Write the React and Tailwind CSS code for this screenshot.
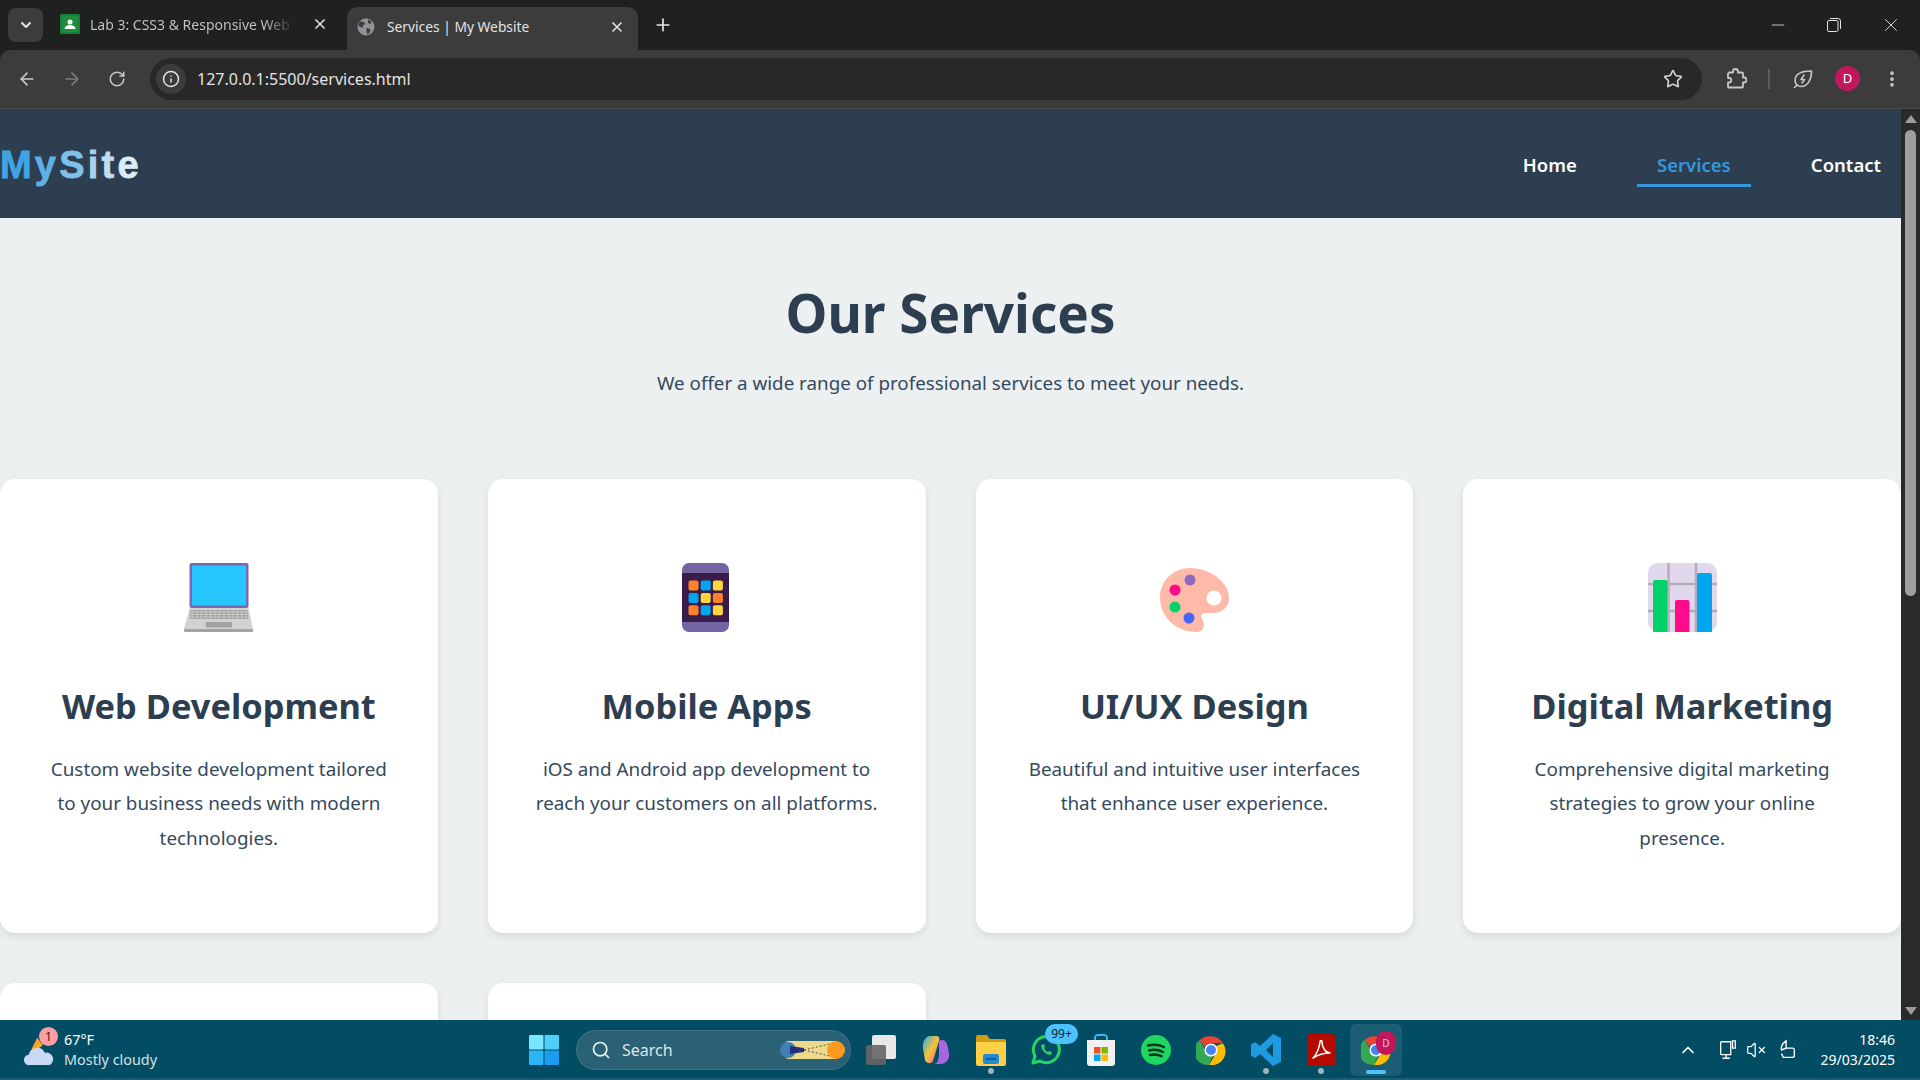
import { ArrowLeft, ArrowRight, ChevronDown, ChevronUp, Info, Minus, MoreVertical, Plus, RotateCw, Search, Star, VolumeX, X } from "lucide-react";

const SERVICES = [
  { title: "Web Development", text: "Custom website development tailored to your business needs with modern technologies.", icon: <LaptopIcon /> },
  { title: "Mobile Apps", text: "iOS and Android app development to reach your customers on all platforms.", icon: <PhoneIcon /> },
  { title: "UI/UX Design", text: "Beautiful and intuitive user interfaces that enhance user experience.", icon: <PaletteIcon /> },
  { title: "Digital Marketing", text: "Comprehensive digital marketing strategies to grow your online presence.", icon: <ChartIcon /> },
];

function LaptopIcon() {
  const keys = [49, 51.5, 54];
  return (
    <svg viewBox="0 0 69 69" className="h-[69px] w-[69px]">
      <rect x="5.5" y="0" width="59" height="45" rx="2" fill="#7b68ae" />
      <rect x="8" y="2.5" width="54" height="40" fill="#26c6ff" />
      <path d="M5.5 45h59L69 66H0z" fill="#d2d2d2" />
      <path d="M0 66h69v2a1 1 0 0 1-1 1H1a1 1 0 0 1-1-1z" fill="#a3a3a3" />
      <path d="M6.500 47h57l1 9h-59z" fill="#a9a9a9" />
      {keys.map((y) => (
        <path key={y} d={`M7 ${y}h56`} stroke="#d8d8d8" strokeWidth="1" strokeDasharray="3 1.500" />
      ))}
      <rect x="22" y="59" width="26" height="5.500" fill="#a3a3a3" />
    </svg>
  );
}

function PhoneIcon() {
  const colors = ["#ff8228", "#00a6ed", "#ffd53d", "#00a6ed", "#ffd53d", "#ff8228", "#ff8228", "#00a6ed", "#ffd53d"];
  return (
    <svg viewBox="0 0 47 69" className="-ml-[2px] h-[69px] w-[47px]">
      <rect width="47" height="69" rx="7" fill="#7364a4" />
      <rect y="10" width="47" height="49" fill="#3a1c4a" />
      {colors.map((color, i) => (
        <rect key={i} x={6.5 + (i % 3) * 12.2} y={17.500 + Math.floor(i / 3) * 12.4} width="10" height="10" rx="2" fill={color} />
      ))}
    </svg>
  );
}

function PaletteIcon() {
  return (
    <svg viewBox="0 0 69 64" className="mt-[5px] h-[64px] w-[69px]">
      <path d="M30 0C50 0 69 14 69 30C69 39 62 45 53 45L46 45C42 45 40 48 42 51C45 55 45 64 37 64C15 64 0 48 0 30C0 12 14 0 30 0Z" fill="#ffb9a8" />
      <ellipse cx="30" cy="12" rx="5.500" ry="5.500" fill="#8f68c4" />
      <circle cx="15" cy="22" r="5.500" fill="#ff0a8c" />
      <circle cx="15" cy="39" r="5.500" fill="#00d26a" />
      <circle cx="29" cy="50" r="5.500" fill="#4466ff" />
      <ellipse cx="54" cy="30" rx="7.500" ry="7.500" fill="#fff" />
    </svg>
  );
}

function ChartIcon() {
  return (
    <svg viewBox="0 0 69 69" className="h-[69px] w-[69px]">
      <rect width="69" height="69" rx="10" fill="#e1d8ec" />
      <path d="M20.500 0v69M48 0v69M0 21h69M0 48h69" stroke="#b4acbc" strokeWidth="2.500" />
      <path d="M5 69V19a2 2 0 0 1 2-2h10.500a2 2 0 0 1 2 2v50z" fill="#00d26a" />
      <path d="M27 69V39a2 2 0 0 1 2-2h10.500a2 2 0 0 1 2 2v30z" fill="#ff0a8c" />
      <path d="M49 69V12a2 2 0 0 1 2-2h11a2 2 0 0 1 2 2v57z" fill="#00a6ed" />
    </svg>
  );
}

function GlobeIcon() {
  return (
    <svg viewBox="0 0 18 18" className="h-[18px] w-[18px]">
      <circle cx="9" cy="9" r="8.500" fill="#8e9398" />
      <path d="M3 3.500l4 .5 1 2-2 1.500-.500 2.500-3-1.500L1 7zM11 1.500l3.500 2-1 2.500-2.500-1zM9.500 10l4 1-.5 3-2.500 2.500-1-3z" fill="#3c3c3c" />
    </svg>
  );
}

function ClassroomIcon() {
  return (
    <svg viewBox="0 0 20 20" className="h-5 w-5">
      <rect width="20" height="20" rx="1.500" fill="#188038" />
      <rect x="2" y="2" width="16" height="16" fill="#1e8e3e" />
      <circle cx="10" cy="8" r="2.500" fill="#fff" />
      <path d="M4.500 15c.5-3 2.500-4 5.500-4s5 1 5.500 4z" fill="#fff" />
    </svg>
  );
}

function LeafIcon() {
  return (
    <svg viewBox="0 0 20 20" className="h-5 w-5" fill="none" stroke="#c4c7c5" strokeWidth="1.600">
      <path d="M18.500 2C11 2 2.500 3 2 11c-.2 4 3 6.500 6 6.500 7 0 10.500-7 10.500-15.500z" strokeLinejoin="round" />
      <path d="M1.500 18.500l2.500-2.500M11 6l-3 4.500h3.500L9 14" strokeLinecap="round" strokeLinejoin="round" />
    </svg>
  );
}

function PuzzleIcon() {
  return (
    <svg viewBox="0 0 21 21" className="h-[21px] w-[21px]" fill="none" stroke="#c7c7c7" strokeWidth="1.800" strokeLinejoin="round">
      <path d="M3 4.500h4V3.500a2.500 2.500 0 0 1 5 0v1h4a1 1 0 0 1 1 1v4h1a2.500 2.500 0 0 1 0 5h-1v4a1 1 0 0 1-1 1H3a1 1 0 0 1-1-1v-4h1a2.200 2.200 0 0 0 0-4.500H2v-4a1 1 0 0 1 1-1z" />
    </svg>
  );
}

function Scrollbar() {
  return (
    <div className="flex w-[19px] shrink-0 flex-col items-center bg-[#2a2a2a] pt-[6px]">
      <div className="h-0 w-0 border-x-[6px] border-b-[8px] border-x-transparent border-b-[#9c9c9c]" />
      <div className="mt-[7px] h-[466px] w-[11px] rounded-full bg-[#9f9f9f]" />
      <div className="mt-auto mb-[5px] h-0 w-0 border-x-[6px] border-t-[8px] border-x-transparent border-t-[#9c9c9c]" />
    </div>
  );
}

function ServiceCard({ service }) {
  return (
    <article className="flex h-[454px] flex-col items-center rounded-[15px] bg-white px-[44px] pt-[84px] text-center shadow-[0_4px_8px_rgba(0,0,0,0.09)]">
      <div className="flex h-[69px] items-start">{service.icon}</div>
      <h3 className="mt-[50px] text-[34.400px] leading-[48px] font-bold whitespace-nowrap text-[#2c3e50]">{service.title}</h3>
      <p className="mt-[22px] text-[18.850px] leading-[34.300px] text-[#34495e]">{service.text}</p>
    </article>
  );
}

function TaskIcon({ children, dot, active }) {
  return (
    <div className={`relative flex h-[50px] w-[50px] items-center justify-center rounded-[5px] ${active ? "bg-white/10 ring-1 ring-white/10" : ""}`}>
      {children}
      {dot && <span className="absolute bottom-[1px] left-[22px] h-[6px] w-[6px] rounded-full bg-[#9db4bd]" />}
      {active && <span className="absolute bottom-[1px] left-[15px] h-[4px] w-[20px] rounded-full bg-[#4cc2ff]" />}
    </div>
  );
}

function ChromeLogo() {
  return (
    <svg viewBox="0 0 48 48" className="h-[30px] w-[30px]">
      <path d="M24 2a22 22 0 0 1 19 11H24a11 11 0 0 0-10 6L6 8a22 22 0 0 1 18-6z" fill="#ea4335" />
      <path d="M6 8l9 16a10 10 0 0 0 12 9l-6 14.800A22 22 0 0 1 6 8z" fill="#34a853" />
      <path d="M43 13a22 22 0 0 1-22 34.800l10-17a10 10 0 0 0 0-12.800z" fill="#fbbc04" />
      <circle cx="24" cy="24" r="10.500" fill="#fff" />
      <circle cx="24" cy="24" r="8" fill="#4285f4" />
    </svg>
  );
}

function Taskbar() {
  return (
    <footer className="relative flex h-[60px] shrink-0 items-center justify-between bg-[#024c64] font-['Noto_Sans',sans-serif] text-white shadow-[inset_0_-2px_0_#1c5d72]">
      <div className="flex w-[516px] items-center pl-[24px]">
        <div className="relative h-[34px] w-[36px]">
          <svg viewBox="0 0 36 34" className="h-[34px] w-[34px]">
            <path d="M14 4l6 8-8 6-4-2z" fill="#f6a623" />
            <path d="M6 33a5.500 5.500 0 0 1-1-11 9 9 0 0 1 17-2 7 7 0 0 1 5 13z" fill="#c9d8f5" />
          </svg>
          <span className="absolute top-[-6px] left-[15px] flex h-[19px] w-[19px] items-center justify-center rounded-full bg-[#ff9ea5] text-[12px] text-[#222]">1</span>
        </div>
        <div className="ml-[4px] text-[14.400px] leading-[20px]">
          <div>67°F</div>
          <div className="text-[#d5e2e7]">Mostly cloudy</div>
        </div>
      </div>
      <div className="absolute left-[516px] flex items-center">
        <div className="flex h-[50px] w-[56px] items-center justify-center">
          <svg viewBox="0 0 30 30" className="h-[30px] w-[30px]">
            <rect width="14.500" height="14.500" rx="1" fill="#7ce5ff" />
            <rect x="15.500" width="14.500" height="14.500" rx="1" fill="#4fd0fb" />
            <rect y="15.500" width="14.500" height="14.500" rx="1" fill="#2cb5f5" />
            <rect x="15.500" y="15.500" width="14.500" height="14.500" rx="1" fill="#1a9cf0" />
          </svg>
        </div>
        <div className="ml-[4px] flex h-[40px] w-[275px] items-center rounded-full border border-white/10 bg-[#2b6174] pl-[14px]">
          <Search className="h-5 w-5 text-[#e8eff2]" strokeWidth={2} />
          <span className="ml-[11px] text-[16px] text-[#dbe6ea]">Search</span>
          <svg viewBox="0 0 66 24" className="mr-[4px] ml-auto h-[24px] w-[66px]">
            <rect x="6" y="3" width="52" height="18" rx="2" fill="#ecd98c" />
            <circle cx="8" cy="12" r="8" fill="#3f7fb4" />
            <path d="M10 8l14 2v4l-14 2z" fill="#2a2f7a" />
            <path d="M24 12l30-7M24 12l30 7" stroke="#555" strokeWidth="1" strokeDasharray="2 2" />
            <circle cx="56" cy="12" r="9" fill="#ff9a1f" />
          </svg>
        </div>
        <div className="ml-[5px] flex w-[50px] items-center justify-center">
          <div className="relative h-[30px] w-[30px]">
            <div className="absolute top-0 right-0 h-[24px] w-[24px] rounded-[2px] bg-[#e8e8e8]" />
            <div className="absolute bottom-0 left-0 h-[20px] w-[20px] rounded-[2px] bg-[#666]/90" />
          </div>
        </div>
        <div className="ml-[5px] flex items-center gap-[5px]">
          <TaskIcon>
            <svg viewBox="0 0 30 30" className="h-[30px] w-[30px]">
              <defs>
                <linearGradient id="cp" x1="0" y1="0" x2="1" y2="1">
                  <stop offset="0" stopColor="#2aa6f0" />
                  <stop offset="0.500" stopColor="#f5c636" />
                  <stop offset="1" stopColor="#e74fa0" />
                </linearGradient>
              </defs>
              <path d="M18 6c3-2 7-1 8 3l2 9c1 6-3 11-8 11h-7c4-1 4-4 5-8z" fill="#a866e0" />
              <path d="M9 1h6c3 0 4 2 3 5l-6 20c-1 3-7 3-8-1L2 13C1 7 5 1 9 1z" fill="url(#cp)" />
            </svg>
          </TaskIcon>
          <TaskIcon dot>
            <svg viewBox="0 0 30 32" className="h-[32px] w-[30px]">
              <path d="M0 3a2 2 0 0 1 2-2h9l3 4h14a2 2 0 0 1 2 2v4H0z" fill="#d59b12" />
              <path d="M0 8h30v22a2 2 0 0 1-2 2H2a2 2 0 0 1-2-2z" fill="#fdd048" />
              <rect x="7" y="20" width="16" height="10" rx="2" fill="#1c8bd8" />
              <rect x="10" y="24" width="10" height="2" fill="#0b5d9c" />
            </svg>
          </TaskIcon>
          <TaskIcon>
            <svg viewBox="0 0 30 30" className="h-[30px] w-[30px]" fill="none">
              <path d="M2 28l2-7a13 13 0 1 1 5 5z" stroke="#25d366" strokeWidth="3" strokeLinejoin="round" />
              <path d="M10 10c0 5 5 10 10 10l1-3-3-1-1 1c-2-1-3-2-4-4l1-1-1-3z" fill="#25d366" />
            </svg>
            <span className="absolute top-[-1px] left-[24px] flex h-[20px] w-[33px] items-center justify-center rounded-[10px] bg-[#4cc2ff] text-[12px] text-[#0b2530]">99+</span>
          </TaskIcon>
          <TaskIcon>
            <svg viewBox="0 0 30 32" className="h-[32px] w-[30px]">
              <path d="M9 6V3a3 3 0 0 1 3-2h6a3 3 0 0 1 3 2v3" fill="none" stroke="#3cb6ea" strokeWidth="2" />
              <path d="M1 6h28v23a3 3 0 0 1-3 3H4a3 3 0 0 1-3-3z" fill="#f1f1f1" />
              <rect x="8" y="13" width="6.500" height="6.500" fill="#f25022" />
              <rect x="15.500" y="13" width="6.500" height="6.500" fill="#7fba00" />
              <rect x="8" y="20.500" width="6.500" height="6.500" fill="#00a4ef" />
              <rect x="15.500" y="20.500" width="6.500" height="6.500" fill="#ffb900" />
            </svg>
          </TaskIcon>
          <TaskIcon>
            <svg viewBox="0 0 30 30" className="h-[30px] w-[30px]" fill="none">
              <circle cx="15" cy="15" r="15" fill="#1ed760" />
              <path d="M7 10.500c6-1.500 11-1 16 1.500M8 15.500c5-1.200 9.500-.8 14 1.500M9 20c4-1 8-.6 11.500 1.200" stroke="#10331f" strokeWidth="2.500" strokeLinecap="round" />
            </svg>
          </TaskIcon>
          <TaskIcon><ChromeLogo /></TaskIcon>
          <TaskIcon dot>
            <svg viewBox="0 0 30 32" className="h-[32px] w-[30px]">
              <path d="M22 0l8 4v24l-8 4L9 20l-5 4-4-2.500V10.500L4 8l5 4zM22 9l-7 7 7 7z" fill="#1e9ae0" />
            </svg>
          </TaskIcon>
          <TaskIcon dot>
            <svg viewBox="0 0 28 32" className="h-[32px] w-[28px]" fill="none">
              <rect width="28" height="32" rx="3" fill="#b30b00" />
              <path d="M6 24c3-3 6-9 7-16 .2-2 2-2 2 0 0 6 4 11 8 11-5 0-11 1-17 5z" stroke="#fff" strokeWidth="1.600" strokeLinejoin="round" />
            </svg>
          </TaskIcon>
          <TaskIcon active>
            <ChromeLogo />
            <span className="absolute top-[6px] right-[5px] flex h-[24px] w-[20px] items-center justify-center rounded-full bg-[#c2185b] text-[10px] text-[#f3c1d4]">D</span>
          </TaskIcon>
        </div>
      </div>
      <div className="ml-auto flex items-center pr-[25px]">
        <ChevronUp className="h-[20px] w-[20px]" strokeWidth={2} />
        <svg viewBox="0 0 20 24" className="ml-[20px] h-[22px] w-[20px]" fill="none" stroke="#fff" strokeWidth="1.400">
          <path d="M13 3H3a1 1 0 0 0-1 1v12a1 1 0 0 0 1 1h10zM8 17v4M4 21h8M15 2h3v8h-3z" />
        </svg>
        <VolumeX className="ml-[8px] h-[20px] w-[20px]" strokeWidth={1.500} />
        <svg viewBox="0 0 20 24" className="ml-[11px] h-[22px] w-[20px]" fill="none" stroke="#fff" strokeWidth="1.500">
          <path d="M9 2C5 5 3 8 4 12l5-2zM9 10h7a2 2 0 0 1 2 2v6a2 2 0 0 1-2 2H6l-2-4" />
        </svg>
        <div className="ml-[24px] text-right text-[14px] leading-[20px]">
          <div>18:46</div>
          <div>29/03/2025</div>
        </div>
      </div>
    </footer>
  );
}

export default function App() {
  return (
    <div className="flex h-[1080px] w-[1920px] flex-col overflow-hidden bg-[#1f2120] font-['Noto_Sans',sans-serif]">
      <div className="flex h-[50px] shrink-0 items-end bg-[#1f2120] pl-[8px] text-[14px]">
        <div className="mb-[8px] flex h-[34px] w-[35px] items-center justify-center rounded-[8px] bg-[#3c3c3c]">
          <ChevronDown className="h-4 w-4 text-[#e3e3e3]" strokeWidth={3} />
        </div>
        <div className="ml-[17px] flex h-[43px] w-[279px] items-center pb-[9px]">
          <ClassroomIcon />
          <span className="ml-[10px] w-[205px] bg-gradient-to-r from-[#c4c7c5] from-85% to-[#1f2120] bg-clip-text whitespace-nowrap text-transparent">Lab 3: CSS3 &amp; Responsive Web</span>
          <X className="ml-[17px] h-4 w-4 text-[#e3e3e3]" strokeWidth={2.500} />
        </div>
        <div className="ml-[8px] flex h-[43px] w-[291px] items-center rounded-t-[10px] bg-[#3c3c3c] pr-[13px] pb-[3px] pl-[10px] text-[#e3e3e3]">
          <GlobeIcon />
          <span className="ml-[12px] text-[13.800px]">Services | My Website</span>
          <X className="ml-auto h-4 w-4" strokeWidth={2.500} />
        </div>
        <Plus className="mb-[15px] ml-[15px] h-[20px] w-[20px] text-[#e3e3e3]" strokeWidth={2} />
        <div className="mb-[14px] ml-auto flex items-center pr-[18px] text-[#e3e3e3]">
          <Minus className="h-[20px] w-[20px]" strokeWidth={1} />
          <svg viewBox="0 0 14 14" className="ml-[39px] h-[14px] w-[14px]" fill="none" stroke="currentColor" strokeWidth="1">
            <rect x="0.500" y="2.500" width="10.500" height="11" rx="1.500" />
            <path d="M3 .5h8a2.500 2.500 0 0 1 2.500 2.500v8" />
          </svg>
          <X className="ml-[39px] h-[22px] w-[22px]" strokeWidth={1} />
        </div>
      </div>

      <div className="flex h-[59px] shrink-0 items-center rounded-t-[10px] border-b border-b-[#4a4a45] bg-[#3c3c3c] pb-[1px] text-[#c7c7c7]">
        <div className="flex w-[150px] items-center gap-[25px] pl-[17px]">
          <ArrowLeft className="h-[20px] w-[20px]" strokeWidth={2} />
          <ArrowRight className="h-[20px] w-[20px] text-[#7c7c7c]" strokeWidth={2} />
          <RotateCw className="ml-[1px] h-[18px] w-[18px]" strokeWidth={2} />
        </div>
        <div className="flex h-[42px] w-[1552px] items-center rounded-full bg-[#282828] pl-[6px]">
          <div className="flex h-[30px] w-[30px] items-center justify-center rounded-full bg-[#3c3c3c]">
            <Info className="h-[18px] w-[18px] text-[#e3e3e3]" strokeWidth={2} />
          </div>
          <span className="ml-[11px] text-[16px] text-[#e3e3e3]">127.0.0.1:5500/services.html</span>
          <Star className="mr-[19px] ml-auto h-[20px] w-[20px] text-[#d0d0d0]" strokeWidth={2} />
        </div>
        <div className="ml-[24px]"><PuzzleIcon /></div>
        <div className="ml-[21px] h-[20px] w-[2px] bg-[#5c5c5c]" />
        <div className="ml-[23px]"><LeafIcon /></div>
        <div className="ml-[22px] flex h-[25px] w-[25px] items-center justify-center rounded-full bg-[#c2185b] text-[13px] text-white">D</div>
        <MoreVertical className="ml-[22px] h-[20px] w-[20px]" strokeWidth={2.500} />
      </div>

      <div className="flex min-h-0 flex-1">
        <main className="min-w-0 flex-1 overflow-hidden bg-[#ecf0f1]">
          <header className="flex h-[109px] items-center justify-between bg-[#2c3e50]">
            <span className="mt-[4px] font-['Liberation_Sans',sans-serif] text-[38px] font-bold tracking-[3.200px]">
              <span className="text-[#3ea4e3] [-webkit-text-stroke:0.8px_#3ea4e3]">M</span>
              <span className="text-[#5fb0e4] [-webkit-text-stroke:0.8px_#5fb0e4]">y</span>
              <span className="text-[#7fc0e8] [-webkit-text-stroke:0.8px_#7fc0e8]">S</span>
              <span className="text-[#a6d2ee] [-webkit-text-stroke:0.8px_#a6d2ee]">i</span>
              <span className="text-[#c0def1] [-webkit-text-stroke:0.8px_#c0def1]">t</span>
              <span className="text-[#dcecf6] [-webkit-text-stroke:0.8px_#dcecf6]">e</span>
            </span>
            <nav className="flex items-center gap-[40px] text-[18.500px] leading-[28px] font-semibold text-white">
              <a className="border-b-[3px] border-b-transparent px-[20px] pt-[11px] pb-[5px]">Home</a>
              <a className="w-[114px] border-b-[3px] border-b-[#3498db] pt-[11px] pb-[5px] text-center text-[#3498db]">Services</a>
              <a className="border-b-[3px] border-b-transparent px-[20px] pt-[11px] pb-[5px]">Contact</a>
            </nav>
          </header>
          <section className="pt-[57px] text-center">
            <h1 className="text-[53px] leading-[76px] font-bold text-[#2c3e50]">Our Services</h1>
            <p className="mt-[15px] text-[18.800px] leading-[34px] text-[#34495e]">We offer a wide range of professional services to meet your needs.</p>
          </section>
          <section className="mt-[79px] grid grid-cols-4 gap-[50px]">
            {SERVICES.map((service) => (
              <ServiceCard key={service.title} service={service} />
            ))}
            <div className="h-[200px] rounded-[15px] bg-white shadow-[0_4px_8px_rgba(0,0,0,0.09)]" />
            <div className="h-[200px] rounded-[15px] bg-white shadow-[0_4px_8px_rgba(0,0,0,0.09)]" />
          </section>
        </main>
        <Scrollbar />
      </div>

      <Taskbar />
    </div>
  );
}
